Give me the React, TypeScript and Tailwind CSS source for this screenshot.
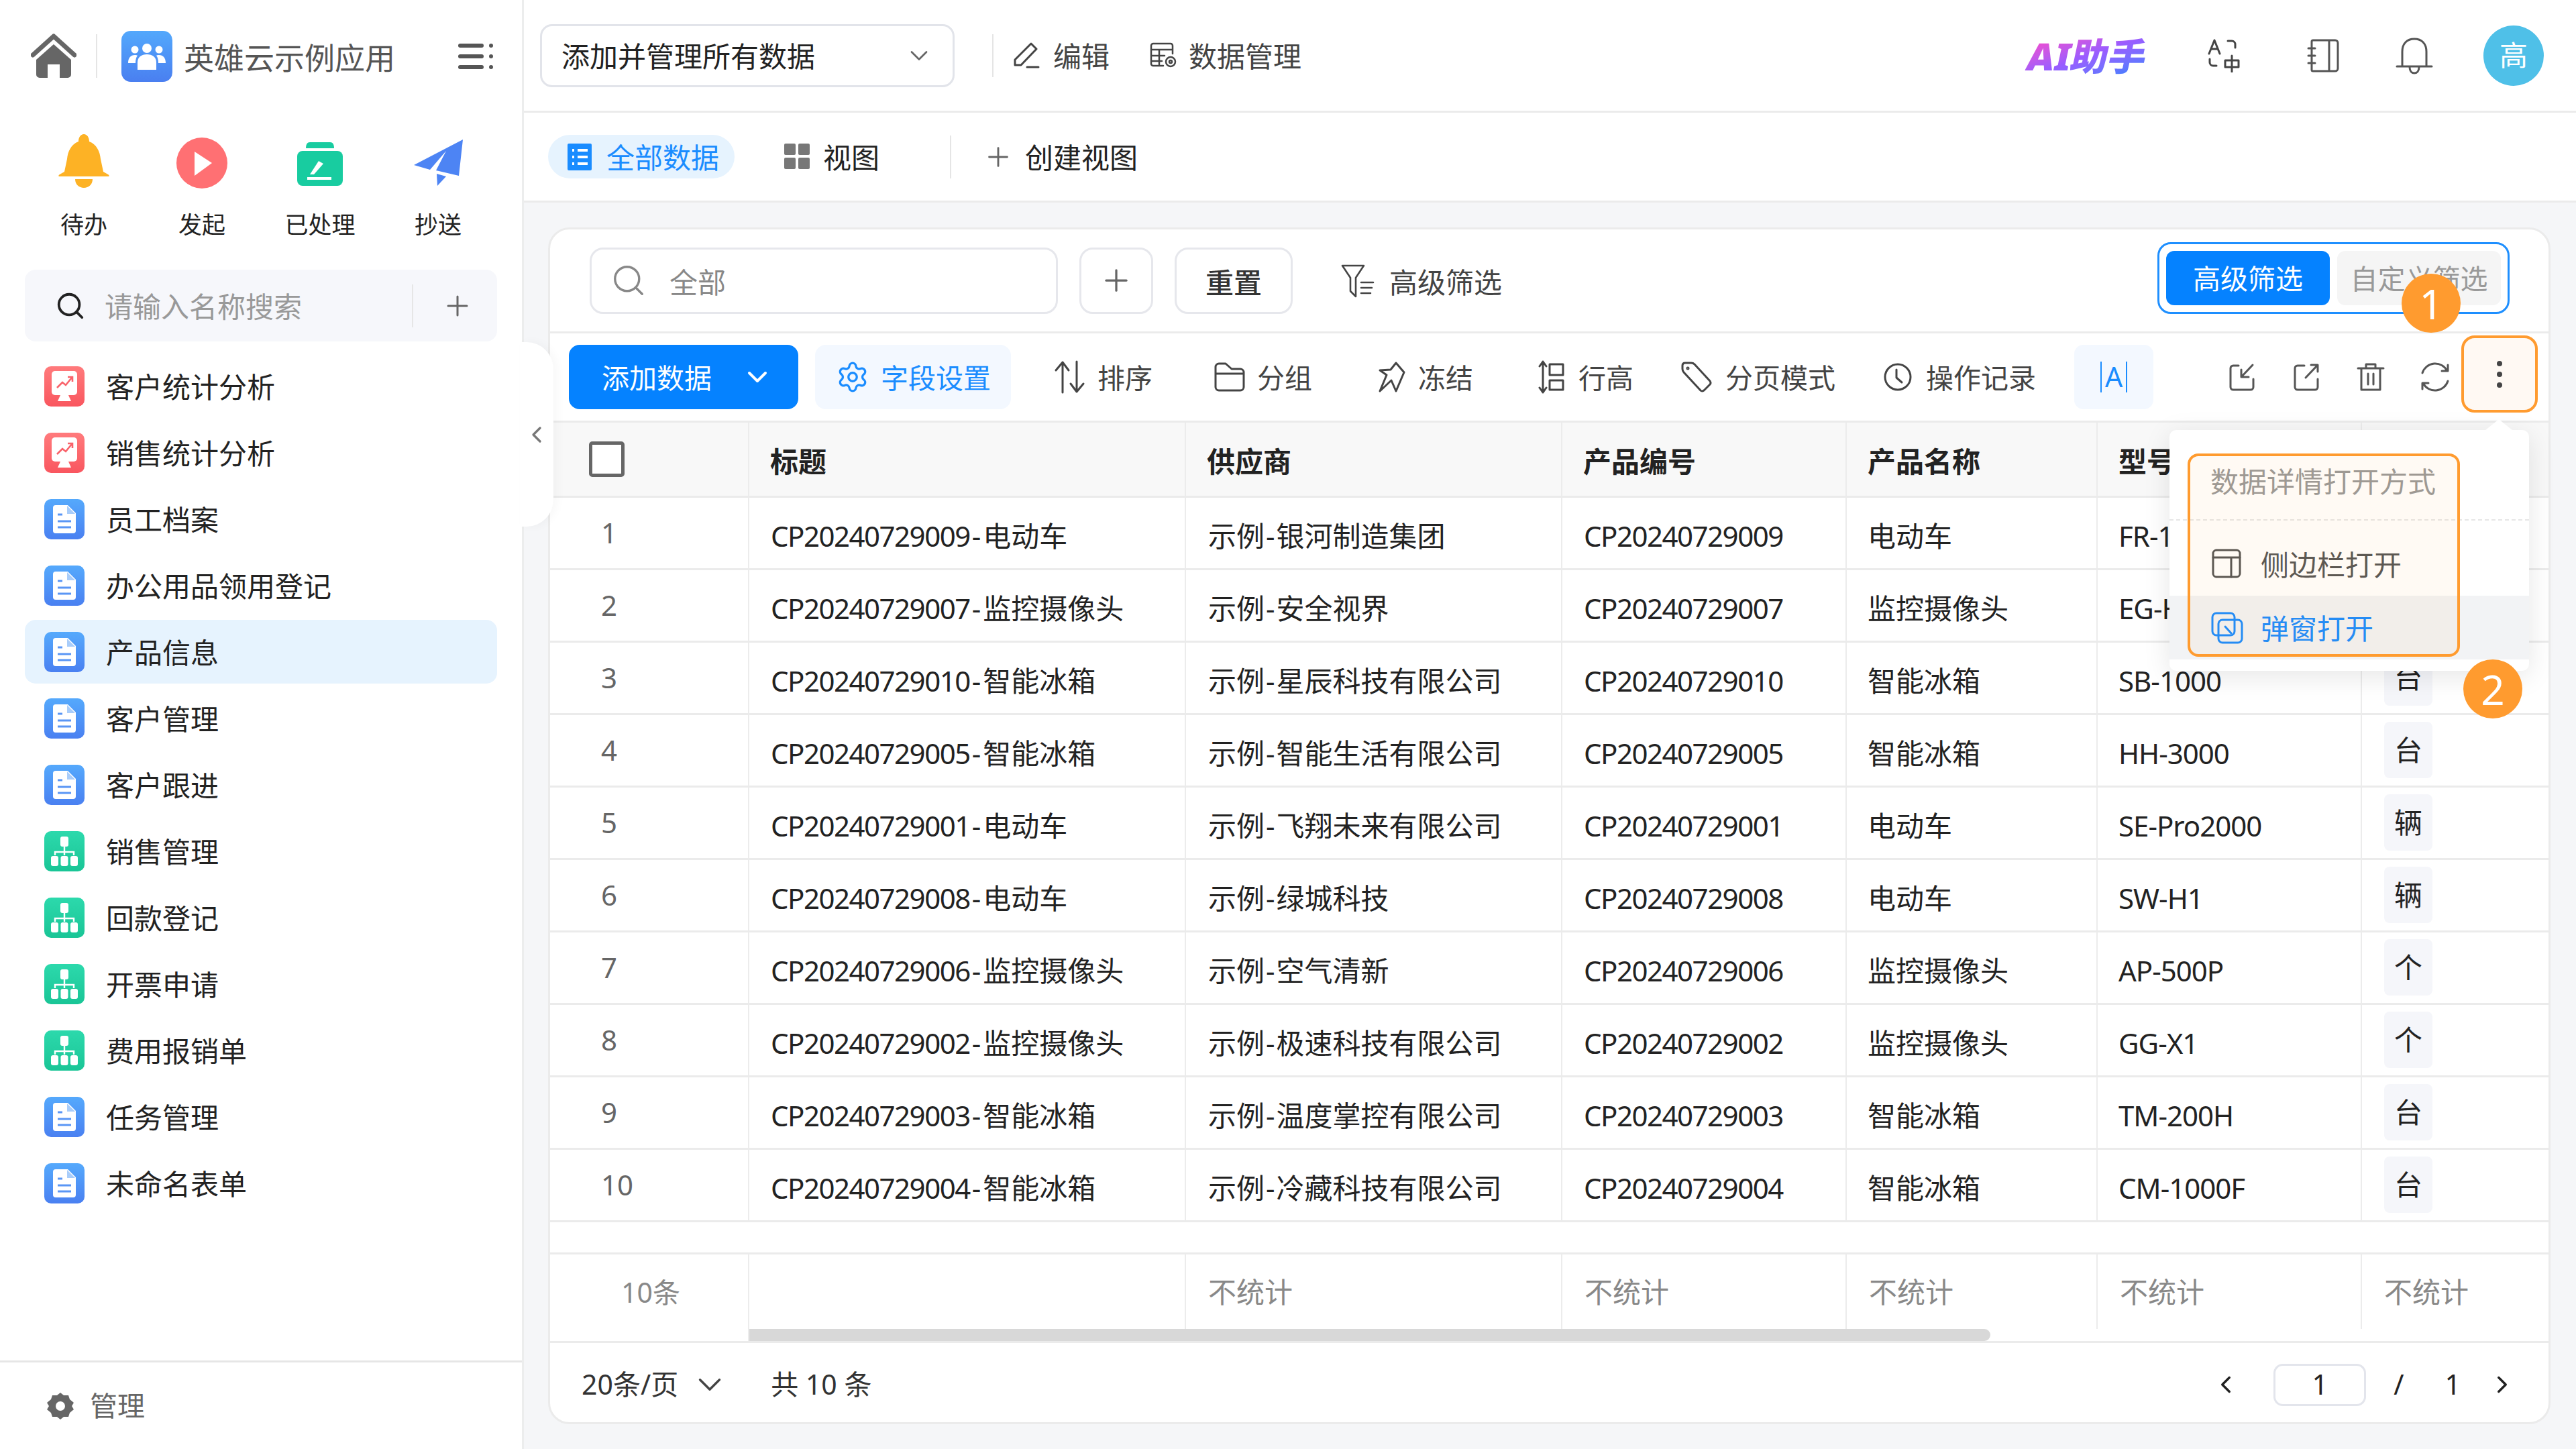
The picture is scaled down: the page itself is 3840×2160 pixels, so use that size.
import type { ReactNode } from "react";
import { ChevronDown, ChevronLeft, ChevronRight, Plus, Search, Settings } from "lucide-react";

/* ── Data ── */
const menu: Array<{ name: string; kind: "chart" | "doc" | "tree"; active?: boolean }> = [
  { name: "客户统计分析", kind: "chart" },
  { name: "销售统计分析", kind: "chart" },
  { name: "员工档案", kind: "doc" },
  { name: "办公用品领用登记", kind: "doc" },
  { name: "产品信息", kind: "doc", active: true },
  { name: "客户管理", kind: "doc" },
  { name: "客户跟进", kind: "doc" },
  { name: "销售管理", kind: "tree" },
  { name: "回款登记", kind: "tree" },
  { name: "开票申请", kind: "tree" },
  { name: "费用报销单", kind: "tree" },
  { name: "任务管理", kind: "doc" },
  { name: "未命名表单", kind: "doc" },
];

const rows = [
  ["CP20240729009", "电动车", "银河制造集团", "FR-1000", "辆"],
  ["CP20240729007", "监控摄像头", "安全视界", "EG-H100", "个"],
  ["CP20240729010", "智能冰箱", "星辰科技有限公司", "SB-1000", "台"],
  ["CP20240729005", "智能冰箱", "智能生活有限公司", "HH-3000", "台"],
  ["CP20240729001", "电动车", "飞翔未来有限公司", "SE-Pro2000", "辆"],
  ["CP20240729008", "电动车", "绿城科技", "SW-H1", "辆"],
  ["CP20240729006", "监控摄像头", "空气清新", "AP-500P", "个"],
  ["CP20240729002", "监控摄像头", "极速科技有限公司", "GG-X1", "个"],
  ["CP20240729003", "智能冰箱", "温度掌控有限公司", "TM-200H", "台"],
  ["CP20240729004", "智能冰箱", "冷藏科技有限公司", "CM-1000F", "台"],
];

const cols = "grid grid-cols-[297px_651px_561px_424px_374px_394px_278px]";

/* ── Icons ── */
function Ic({ w, h, children, sw = 3 }: { w: number; h: number; children: ReactNode; sw?: number }) {
  return (
    <svg
      width={w}
      height={h}
      viewBox={`0 0 ${w} ${h}`}
      fill="none"
      stroke="currentColor"
      strokeWidth={sw}
      strokeLinecap="round"
      strokeLinejoin="round"
      className="shrink-0"
    >
      {children}
    </svg>
  );
}

function MenuIcon({ kind }: { kind: "chart" | "doc" | "tree" }) {
  const bg =
    kind === "chart"
      ? "from-[#ff7a7c] to-[#f9565f]"
      : kind === "doc"
        ? "from-[#55a9fc] to-[#4a80f1]"
        : "from-[#2cd9ac] to-[#19c596]";
  return (
    <div className={`flex h-[60px] w-[60px] shrink-0 items-center justify-center rounded-[10px] bg-linear-to-b ${bg}`}>
      {kind === "chart" && (
        <svg width="40" height="48" viewBox="0 0 40 48">
          <rect x="1" y="1" width="38" height="36" rx="5" fill="#fff" />
          <path d="M14 37h12l4 9H10z" fill="#fff" />
          <path d="M9 26l8-8 5 4 9-11M25 10h7v7" fill="none" stroke="#f9626a" strokeWidth="2.6" />
        </svg>
      )}
      {kind === "doc" && (
        <svg width="34" height="42" viewBox="0 0 34 42">
          <path d="M4 0h18l12 12v26a4 4 0 0 1-4 4H4a4 4 0 0 1-4-4V4a4 4 0 0 1 4-4z" fill="#fff" />
          <path d="M21 1v12h12z" fill="#a9cdfa" />
          <path d="M7 14h7M7 24h20M7 33h20" stroke="#5a96f5" strokeWidth="3.2" />
        </svg>
      )}
      {kind === "tree" && (
        <svg width="40" height="44" viewBox="0 0 40 44">
          <rect x="14" y="0" width="12" height="15" rx="3" fill="#fff" />
          <path d="M20 14v10M6 28v-5h28v5M20 23v5" stroke="#fff" strokeWidth="2.4" fill="none" />
          <rect x="0" y="29" width="11" height="15" rx="3" fill="#fff" />
          <rect x="14.5" y="29" width="11" height="15" rx="3" fill="#fff" />
          <rect x="29" y="29" width="11" height="15" rx="3" fill="#fff" />
        </svg>
      )}
    </div>
  );
}

function Tool({
  icon,
  label,
  className = "",
  tight,
}: {
  icon: ReactNode;
  label: string;
  className?: string;
  tight?: boolean;
}) {
  return (
    <div className={`flex items-center text-[#444] ${tight ? "gap-[18px]" : "gap-[20px]"} ${className}`}>
      {icon}
      <span className="pt-[3px]">{label}</span>
    </div>
  );
}

function Badge({ n, className }: { n: string; className: string }) {
  return (
    <div
      className={`absolute z-30 flex h-[88px] w-[88px] items-center justify-center rounded-full bg-[#ff9b2f] text-[62px] text-white ${className}`}
    >
      {n}
    </div>
  );
}

/* ── Sidebar ── */
function Sidebar() {
  return (
    <aside className="relative z-20 flex h-[2160px] w-[781px] shrink-0 flex-col border-r-[3px] border-[#eceded] bg-white">
      <div className="flex h-[167px] shrink-0 items-center pl-[46px]">
        <svg width="68" height="68" viewBox="0 0 68 68" className="-mt-[2px] shrink-0">
          <path d="M3 33L34 5l31 28" fill="none" stroke="#666" strokeWidth="7" strokeLinecap="round" strokeLinejoin="round" />
          <path d="M34 17L60 40v22a5 5 0 0 1-5 5H43V47H25v20H13a5 5 0 0 1-5-5V40z" fill="#666" />
        </svg>
        <div className="ml-[29px] h-[65px] w-[2px] bg-[#e5e5e5]" />
        <div className="ml-[36px] flex h-[76px] w-[76px] shrink-0 items-center justify-center rounded-[14px] bg-linear-to-b from-[#53a8fc] to-[#4a7ff0]">
          <svg width="56" height="40" viewBox="0 0 56 40" fill="#fff">
            <circle cx="28" cy="8" r="7" />
            <circle cx="10" cy="10" r="5.5" />
            <circle cx="46" cy="10" r="5.5" />
            <path d="M14 40V29c0-8 6-12 14-12s14 4 14 12v11z" />
            <path d="M0 30c0-8 4-12 10-12 2 0 3 .4 4 1-2 2-3 6-3 11zM56 30c0-8-4-12-10-12-2 0-3 .4-4 1 2 2 3 6 3 11z" />
          </svg>
        </div>
        <span className="ml-[17px] pt-[6px] text-[45px] text-[#555]">英雄云示例应用</span>
        <svg width="52" height="40" viewBox="0 0 52 40" fill="#555" className="ml-[94px] shrink-0">
          <rect x="0" y="1" width="38" height="6" rx="3" />
          <rect x="0" y="17" width="38" height="6" rx="3" />
          <rect x="0" y="33" width="38" height="6" rx="3" />
          <circle cx="49" cy="4" r="3" />
          <circle cx="49" cy="20" r="3" />
          <circle cx="49" cy="36" r="3" />
        </svg>
      </div>

      <div className="ml-[37px] grid w-[704px] shrink-0 grid-cols-4 pt-[32px] text-[35px] text-[#222]">
        <div className="flex flex-col items-center">
          <svg width="78" height="82" viewBox="0 0 78 82" fill="#fdb225">
            <path d="M39 1c5 0 8 5 8 11 11 4 16 15 17 26l4 19 7 4c2 1 2 3 1 3H2c-1 0-1-2 1-3l7-4 4-19c1-11 6-22 17-26 0-6 3-11 8-11z" />
            <path d="M26 68h26c0 8-6 13-13 13s-13-5-13-13z" />
          </svg>
          <span className="mt-[33px]">待办</span>
        </div>
        <div className="flex flex-col items-center">
          <svg width="78" height="82" viewBox="0 0 78 82">
            <circle cx="39" cy="44" r="38" fill="#ff7073" />
            <path d="M28 27l26 17-26 19z" fill="#fff" />
          </svg>
          <span className="mt-[33px]">发起</span>
        </div>
        <div className="flex flex-col items-center">
          <svg width="78" height="82" viewBox="0 0 78 82">
            <path d="M18 22c0-6 2-9 6-9h30c4 0 6 3 6 9z" fill="#18cca0" />
            <rect x="5" y="26" width="68" height="52" rx="8" fill="#18cca0" />
            <path d="M24 61l13-20 7 4-14 16z" fill="#fff" />
            <rect x="20" y="65" width="36" height="4" fill="#fff" />
          </svg>
          <span className="mt-[33px]">已处理</span>
        </div>
        <div className="flex flex-col items-center">
          <svg width="78" height="82" viewBox="0 0 78 82" fill="#4d84f4">
            <path d="M76 9L3 47l24 7 24-28-15 29 34 8z" />
            <path d="M37 60l14 4-13 14z" />
          </svg>
          <span className="mt-[33px]">抄送</span>
        </div>
      </div>

      <div className="mx-[37px] mt-[46px] flex h-[107px] shrink-0 items-center rounded-[16px] bg-[#f6f7fb]">
        <Search size={46} strokeWidth={2} className="ml-[45px] shrink-0 text-[#222]" />
        <span className="ml-[28px] pt-[3px] text-[#999]">请输入名称搜索</span>
        <div className="ml-[164px] h-[64px] w-[2px] bg-[#e6e6e6]" />
        <Plus size={48} strokeWidth={1.5} className="ml-[42px] shrink-0 text-[#666]" />
      </div>

      <div className="mx-[37px] mt-[19px] flex flex-1 flex-col gap-[4px]">
        {menu.map((m) => (
          <div
            key={m.name}
            className={`flex h-[95px] shrink-0 items-center rounded-[16px] pl-[29px] text-[#222] ${m.active ? "bg-[#e6f3fe]" : ""}`}
          >
            <MenuIcon kind={m.kind} />
            <span className="ml-[32px] pt-[4px]">{m.name}</span>
          </div>
        ))}
      </div>

      <div className="flex h-[132px] shrink-0 items-center border-t-[3px] border-[#e6e6e6] pl-[70px] text-[41px] text-[#666]">
        <svg width="40" height="40" viewBox="0 0 40 40" fill="#666">
          <path
            fillRule="evenodd"
            d="M20 0l5 4 7 0 2 6 6 5-3 5 3 5-6 5-2 6-7 0-5 4-5-4-7 0-2-6-6-5 3-5-3-5 6-5 2-6 7 0zM20 13a7 7 0 1 0 0 14 7 7 0 0 0 0-14z"
          />
        </svg>
        <span className="ml-[24px]">管理</span>
      </div>

      {/* collapse tab */}
      <div className="absolute left-[775px] top-[510px] flex h-[275px] w-[50px] items-center justify-center rounded-r-[40px] bg-white shadow-[6px_0_14px_rgba(0,0,0,0.03)]">
        <ChevronLeft size={40} strokeWidth={2} className="text-[#777]" />
      </div>
    </aside>
  );
}

/* ── Page ── */
export default function App() {
  return (
    <div className="relative flex h-[2160px] w-[3840px] overflow-hidden bg-[#f5f6f8] text-[42px] leading-[1.2] text-[#222] [font-family:'Noto_Sans','Noto_Sans_CJK_SC',sans-serif]">
      <Sidebar />

      <main className="flex min-w-0 flex-1 flex-col">
        {/* Top bar */}
        <header className="flex h-[168px] shrink-0 items-center border-b-[3px] border-[#ebebeb] bg-white pl-[24px] pr-[48px]">
          <div className="flex h-[94px] w-[618px] items-center justify-between rounded-[18px] border-[3px] border-[#e2e4ea] pl-[29px] pr-[28px]">
            <span className="pt-[3px]">添加并管理所有数据</span>
            <ChevronDown size={44} strokeWidth={1.5} className="text-[#666]" />
          </div>
          <div className="ml-[56px] h-[64px] w-[2px] bg-[#e5e5e5]" />
          <Tool
            className="ml-[27px]"
            icon={
              <Ic w={42} h={42}>
                <path d="M29 4l8 8-23 24H5v-8zM23 39h17" />
              </Ic>
            }
            label="编辑"
          />
          <Tool
            tight
            className="ml-[60px]"
            icon={
              <Ic w={40} h={40} sw={2.5}>
                <path d="M20 36H5a3 3 0 0 1-3-3V6a3 3 0 0 1 3-3h26a3 3 0 0 1 3 3v12M2 12h32M2 21h20M2 29h16M14 12v22" />
                <circle cx="31" cy="30" r="7" />
                <circle cx="31" cy="30" r="2" />
              </Ic>
            }
            label="数据管理"
          />
          <span className="ml-auto skew-x-[-12deg] bg-linear-160 from-[#ff3fc6] via-[#9a5cff] to-[#2a80ff] bg-clip-text text-[56px] leading-none font-black text-transparent">
            AI助手
          </span>
          <div className="ml-[91px] text-[#444]">
            <Ic w={50} h={50} sw={3}>
              <path d="M2 22L10 2l8 20M5 15h10M30 3h6a5 5 0 0 1 5 5v5M3 30v5a5 5 0 0 0 5 5h5M26 32h20v10H26zM36 25v24" />
            </Ic>
          </div>
          <div className="ml-[98px] text-[#555]">
            <Ic w={48} h={50}>
              <path d="M9 2h33a4 4 0 0 1 4 4v38a4 4 0 0 1-4 4H9a2 2 0 0 1-2-2V4a2 2 0 0 1 2-2zM33 2v46M2 14h10M2 25h10M2 36h10" />
            </Ic>
          </div>
          <div className="ml-[84px] text-[#555]">
            <Ic w={56} h={56}>
              <path d="M10 44V22C10 10 17 3 28 3s18 7 18 19v22M2 44h52M21 45c0 6 3 9 7 9s7-3 7-9" />
            </Ic>
          </div>
          <div className="ml-[75px] flex h-[90px] w-[90px] items-center justify-center rounded-full bg-[#4fc0e8] text-white">
            高
          </div>
        </header>

        {/* View tabs */}
        <div className="flex h-[134px] shrink-0 items-center border-b-[3px] border-[#ebebeb] bg-white pl-[36px]">
          <div className="flex h-[65px] w-[278px] items-center rounded-[33px] bg-[#e6f3fe] pl-[29px] text-[#1a8cff]">
            <svg width="36" height="40" viewBox="0 0 36 40">
              <rect width="36" height="40" rx="2" fill="#1a8cff" />
              <path d="M7 10h3M15 10h15M7 20h3M15 20h15M7 30h3M15 30h15" stroke="#fff" strokeWidth="4" />
            </svg>
            <span className="ml-[22px] pt-[4px]">全部数据</span>
          </div>
          <div className="ml-[74px] flex items-center gap-[20px] text-[#222]">
            <svg width="38" height="38" viewBox="0 0 38 38" fill="#777">
              <rect width="17" height="17" rx="2" />
              <rect x="21" width="17" height="17" rx="2" />
              <rect y="21" width="17" height="17" rx="2" />
              <rect x="21" y="21" width="17" height="17" rx="2" />
            </svg>
            <span className="pt-[4px]">视图</span>
          </div>
          <div className="ml-[105px] h-[64px] w-[2px] bg-[#e5e5e5]" />
          <Plus size={46} strokeWidth={1.5} className="ml-[47px] text-[#666]" />
          <span className="ml-[17px] pt-[4px]">创建视图</span>
        </div>

        {/* Card */}
        <div className="px-[36px] pt-[37px]">
          <section className="flex h-[1784px] w-[2985px] flex-col overflow-hidden rounded-[32px] border-[3px] border-[#ebebeb] bg-white">
            {/* Filter row */}
            <div className="flex h-[155px] shrink-0 items-center border-b-[3px] border-[#ebebeb] pl-[59px]">
              <div className="flex h-[99px] w-[698px] items-center rounded-[20px] border-[3px] border-[#e6e7ec] pl-[28px] text-[#888]">
                <Search size={54} strokeWidth={1.5} className="text-[#888]" />
                <span className="ml-[34px] pt-[7px]">全部</span>
              </div>
              <div className="ml-[32px] flex h-[99px] w-[110px] items-center justify-center rounded-[20px] border-[3px] border-[#e6e7ec]">
                <Plus size={52} strokeWidth={1.5} className="text-[#666]" />
              </div>
              <div className="ml-[32px] flex h-[99px] w-[176px] items-center justify-center rounded-[20px] border-[3px] border-[#e6e7ec] pt-[6px] font-medium text-[#333]">
                重置
              </div>
              <Tool
                className="ml-[72px] pt-[3px]"
                icon={
                  <Ic w={52} h={52} sw={2.6}>
                    <path d="M2 3h32l-12 18v28l-8-8V21zM30 28h18M30 36h16M30 44h14" />
                  </Ic>
                }
                label="高级筛选"
              />
              <div className="-mt-[8px] ml-auto mr-[58px] flex h-[107px] w-[525px] items-center gap-[11px] rounded-[20px] border-[3px] border-[#1e8fff] px-[10px] text-[41px]">
                <div className="flex h-[81px] w-[244px] items-center justify-center rounded-[12px] bg-[#0582ff] pt-[3px] text-white">
                  高级筛选
                </div>
                <div className="flex h-[81px] w-[244px] items-center justify-center rounded-[12px] bg-[#f5f5f5] pt-[3px] text-[#999]">
                  自定义筛选
                </div>
              </div>
            </div>

            {/* Toolbar */}
            <div className="flex h-[133px] shrink-0 items-center border-b-[3px] border-[#ebebeb] pl-[28px] text-[41px]">
              <div className="flex h-[96px] w-[342px] items-center rounded-[16px] bg-[#0582ff] pl-[49px] text-white">
                <span className="pt-[3px]">添加数据</span>
                <ChevronDown size={48} strokeWidth={2} className="ml-[44px]" />
              </div>
              <div className="ml-[25px] flex h-[96px] w-[292px] items-center gap-[17px] rounded-[16px] bg-[#f3f8ff] pl-[31px] text-[#1a8cff]">
                <Settings size={50} strokeWidth={1.6} />
                <span className="pt-[3px]">字段设置</span>
              </div>
              <Tool
                tight
                className="ml-[64px]"
                icon={
                  <Ic w={47} h={50}>
                    <path d="M13 48V3M3 15L13 3l9 12M34 2v45M25 35l9 12 10-12" />
                  </Ic>
                }
                label="排序"
              />
              <Tool
                tight
                className="ml-[92px]"
                icon={
                  <Ic w={46} h={46}>
                    <path d="M2 8a5 5 0 0 1 5-5h10l9 8h13a5 5 0 0 1 5 5v22a5 5 0 0 1-5 5H7a5 5 0 0 1-5-5zM2 18h42" />
                  </Ic>
                }
                label="分组"
              />
              <Tool
                tight
                className="ml-[98px]"
                icon={
                  <Ic w={42} h={46}>
                    <path d="M27 2l12 14-12 28-7-16L3 44l10-24-10-7 16-1z" />
                  </Ic>
                }
                label="冻结"
              />
              <Tool
                className="ml-[97px]"
                icon={
                  <Ic w={40} h={50}>
                    <path d="M7 2v46M2 9l5-7 5 7M2 41l5 7 5-7M17 6h20v16H17zM17 30h20v14H17z" />
                  </Ic>
                }
                label="行高"
              />
              <Tool
                className="ml-[71px]"
                icon={
                  <Ic w={46} h={46}>
                    <path d="M6 2h9q3 0 5 2l23 25q2 3 0 5l-9 9q-3 2-5 0L4 16q-2-2-2-5V6q0-4 4-4z" />
                    <circle cx="10" cy="10" r="1" />
                  </Ic>
                }
                label="分页模式"
              />
              <Tool
                className="ml-[71px]"
                icon={
                  <Ic w={44} h={44}>
                    <circle cx="22" cy="22" r="19" />
                    <path d="M20 11v12l8 7" />
                  </Ic>
                }
                label="操作记录"
              />
              <div className="ml-[57px] flex h-[96px] w-[118px] items-center justify-center gap-[5px] rounded-[14px] bg-[#f3f8ff] text-[#1a8cff]">
                <span className="h-[46px] w-[2px] bg-[#1a8cff]" />
                <span>A</span>
                <span className="h-[46px] w-[2px] bg-[#1a8cff]" />
              </div>
              <div className="ml-[112px] text-[#555]">
                <Ic w={40} h={42}>
                  <path d="M15 4H7a4 4 0 0 0-4 4v28a4 4 0 0 0 4 4h26a4 4 0 0 0 4-4V24M36 3L19 21M19 10v11h11" />
                </Ic>
              </div>
              <div className="ml-[56px] text-[#555]">
                <Ic w={40} h={42}>
                  <path d="M17 4H7a4 4 0 0 0-4 4v28a4 4 0 0 0 4 4h26a4 4 0 0 0 4-4V24M19 22L37 3M27 3h10v10" />
                </Ic>
              </div>
              <div className="ml-[55px] text-[#555]">
                <Ic w={42} h={44}>
                  <path d="M2 9h38M14 9V3h14v6M7 9v32h28V9M17 17v16M25 17v16" />
                </Ic>
              </div>
              <div className="ml-[52px] text-[#555]">
                <Ic w={46} h={46}>
                  <path d="M4 17A20 20 0 0 1 41 14M42 29A20 20 0 0 1 5 32M42 5v9h-9M4 41v-9h9" />
                </Ic>
              </div>
            </div>

            {/* Table head */}
            <div className={`${cols} h-[112px] shrink-0 border-b-[3px] border-[#ebebeb] bg-[#f8f8f8] font-bold text-[#222]`}>
              <div className="flex items-center border-r-2 border-[#ececec] pl-[58px]">
                <div className="h-[53px] w-[53px] rounded-[5px] border-[5px] border-[#666] bg-white" />
              </div>
              {["标题", "供应商", "产品编号", "产品名称", "型号"].map((h) => (
                <div key={h} className="flex items-center border-r-2 border-[#ececec] pl-[31px] pt-[8px]">
                  {h}
                </div>
              ))}
              <div className="flex items-center pl-[31px] pt-[8px]">单位</div>
            </div>

            {/* Table rows */}
            {rows.map((r, i) => (
              <div key={r[0]} className={`${cols} h-[108px] shrink-0 border-b-[3px] border-[#ebebeb]`}>
                <div className="flex items-center border-r-2 border-[#ececec] pl-[76px] text-[#666]">{i + 1}</div>
                <div className="flex items-center border-r-2 border-[#ececec] pl-[32px] pt-[9px]">
                  <span className="tracking-[-1.5px]">{r[0]}</span>
                  <span className="mx-[3px]">-</span>
                  {r[1]}
                </div>
                <div className="flex items-center border-r-2 border-[#ececec] pl-[33px] pt-[9px]">
                  <span>示例</span>
                  <span className="mx-[2px]">-</span>
                  <span>{r[2]}</span>
                </div>
                <div className="flex items-center border-r-2 border-[#ececec] pl-[32px] pt-[9px] tracking-[-1.5px]">
                  {r[0]}
                </div>
                <div className="flex items-center border-r-2 border-[#ececec] pl-[31px] pt-[9px]">{r[1]}</div>
                <div className="flex items-center border-r-2 border-[#ececec] pl-[31px] pt-[9px] tracking-[-1px]">
                  {r[3]}
                </div>
                <div className="flex items-start pl-[33px] pt-[10px]">
                  <span className="flex h-[84px] w-[72px] items-center justify-center rounded-[8px] bg-[#f5f6fa]">{r[4]}</span>
                </div>
              </div>
            ))}

            <div className="h-[48px] shrink-0 border-b-[3px] border-[#ebebeb]" />

            {/* Summary row */}
            <div className={`${cols} relative h-[132px] shrink-0 border-b-[3px] border-[#ebebeb] text-[#888]`}>
              <div className="flex items-center border-r-2 border-[#ececec] pb-[16px] pl-[106px] text-[41px]">10条</div>
              <div className="border-r-2 border-[#ececec]" />
              {[0, 1, 2, 3].map((k) => (
                <div key={k} className="flex items-center border-r-2 border-[#ececec] pb-[16px] pl-[33px]">
                  不统计
                </div>
              ))}
              <div className="flex items-center pb-[16px] pl-[33px]">不统计</div>
              <div className="absolute bottom-0 left-[297px] right-0 h-[18px] bg-white">
                <div className="h-[18px] w-[1850px] rounded-r-[9px] bg-[#d8d8d8]" />
              </div>
            </div>

            {/* Footer */}
            <div className="flex flex-1 items-center pl-[47px] pr-[48px] pt-[6px] text-[41px] text-[#333]">
              <span>20条/页</span>
              <ChevronDown size={58} strokeWidth={1.4} className="ml-[18px] text-[#444]" />
              <span className="ml-[62px]">共 10 条</span>
              <ChevronLeft size={42} strokeWidth={2} className="ml-auto text-[#222]" />
              <div className="ml-[50px] flex h-[63px] w-[138px] items-center justify-center rounded-[14px] border-[3px] border-[#e3e5ec] text-[#222]">
                1
              </div>
              <span className="ml-[41px] text-[#222]">/</span>
              <span className="ml-[61px] text-[#222]">1</span>
              <ChevronRight size={42} strokeWidth={2} className="ml-[41px] text-[#222]" />
            </div>
          </section>
        </div>
      </main>

      {/* Highlighted more button */}
      <div className="absolute left-[3669px] top-[500px] z-10 flex h-[115px] w-[114px] flex-col items-center justify-center gap-[8px] rounded-[20px] border-[4px] border-[#ff9b2f] bg-[#fff9f3]">
        <span className="h-[8px] w-[8px] rounded-full bg-[#444]" />
        <span className="h-[8px] w-[8px] rounded-full bg-[#444]" />
        <span className="h-[8px] w-[8px] rounded-full bg-[#444]" />
      </div>

      {/* Popover */}
      <div className="absolute left-[3234px] top-[641px] z-20 h-[359px] w-[536px] rounded-[10px] bg-white shadow-[0_8px_40px_rgba(0,0,0,0.10)]">
        <div className="absolute left-[471px] top-[-16px] h-0 w-0 border-x-[20px] border-b-[16px] border-x-transparent border-b-white" />
        <div className="flex h-[135px] items-start border-b-2 border-dashed border-[#e6e6e6] pl-[61px] pt-[52px] text-[#999]">
          数据详情打开方式
        </div>
        <div className="flex h-[112px] items-center pl-[63px] pt-[16px] text-[#555]">
          <Ic w={44} h={44}>
            <rect x="2" y="2" width="40" height="40" rx="5" />
            <path d="M2 13h40M29 13v29" />
          </Ic>
          <span className="ml-[29px] pt-[4px]">侧边栏打开</span>
        </div>
        <div className="flex h-[95px] items-center bg-[#f2f3f5] pl-[62px] text-[#1a8cff]">
          <Ic w={48} h={48}>
            <rect x="2" y="2" width="33" height="33" rx="6" />
            <rect x="11" y="12" width="35" height="34" rx="6" />
            <path d="M21 22l9 10" />
          </Ic>
          <span className="ml-[26px] pt-[4px]">弹窗打开</span>
        </div>
      </div>

      {/* Annotation frame */}
      <div className="absolute left-[3261px] top-[676px] z-20 h-[303px] w-[406px] rounded-[16px] border-[4px] border-[#ff9b2f] bg-[#ff9b2f]/[0.05]" />

      <Badge n="1" className="left-[3580px] top-[408px]" />
      <Badge n="2" className="left-[3672px] top-[983px]" />
    </div>
  );
}
